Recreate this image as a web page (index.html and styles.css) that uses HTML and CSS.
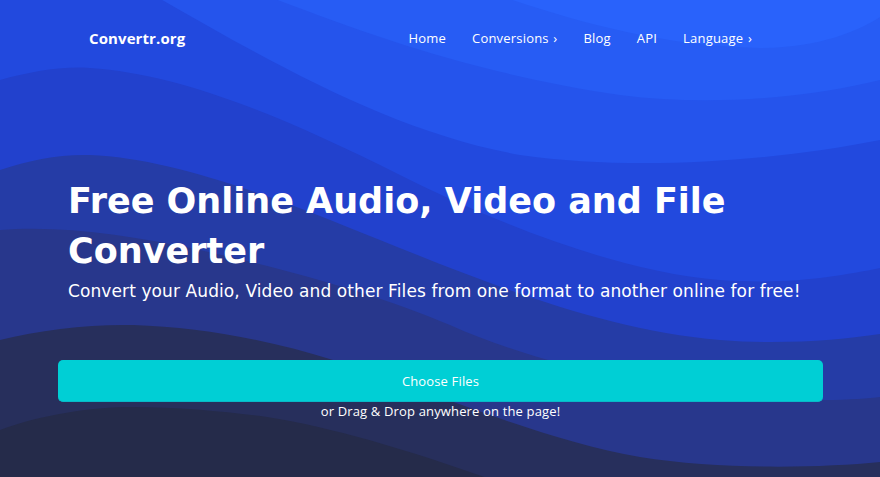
FILE: index.html
```html
<!DOCTYPE html>
<html lang="en">
<head>
<meta charset="utf-8">
<title>Convertr.org - Free Online Audio, Video and File Converter</title>
<link rel="stylesheet" href="styles.css">
</head>
<body>
<div class="page">
  <svg class="waves" viewBox="0 0 880 477" preserveAspectRatio="none" aria-hidden="true">
    <rect x="0" y="0" width="880" height="477" fill="#2962fb"/>
    <path fill="#275cf4" d="M-20,-30 L420,-30 C520,0 620,45 760,48 C820,48 860,30 880,17 L900,17 L900,500 L-20,500 Z"/>
    <path fill="#2554ec" d="M-20,-30 L200,-30 C330,20 450,70 620,95 C720,108 820,95 880,80 L900,80 L900,500 L-20,500 Z"/>
    <path fill="#2249de" d="M-20,-30 L110,-30 C250,50 380,130 520,155 C640,172 780,160 880,140 L900,140 L900,500 L-20,500 Z"/>
    <path fill="#2241cd" d="M-20,80 L0,80 C30,72 60,66 90,68 C180,74 280,115 400,175 C500,225 620,272 720,280 C790,285 840,276 880,268 L900,268 L900,500 L-20,500 Z"/>
    <path fill="#253ca6" d="M-20,170 L0,170 C30,160 60,154 90,155 C170,158 270,195 380,240 C480,280 600,330 720,340 C780,345 840,340 880,334 L900,334 L900,500 L-20,500 Z"/>
    <path fill="#28378c" d="M-20,230 L0,230 C60,225 130,235 200,250 C290,270 380,295 450,325 C550,370 700,400 823,400 C850,400 870,398 880,397 L900,397 L900,500 L-20,500 Z"/>
    <path fill="#272f5c" d="M-20,340 L0,340 C40,330 90,324 133,325 C200,327 270,340 333,360 C430,390 540,440 640,457 C720,470 820,468 880,462 L900,462 L900,500 L-20,500 Z"/>
    <path fill="#252b4a" d="M-20,430 L0,430 C40,415 90,407 133,407 C180,407 230,412 267,417 C340,428 440,460 520,490 L520,500 L-20,500 Z"/>
  </svg>

  <header class="topbar">
    <a class="logo" href="#">Convertr.org</a>
    <nav class="nav">
      <a class="nav-link" href="#">Home</a>
      <a class="nav-link" href="#">Conversions <span class="chev">›</span></a>
      <a class="nav-link" href="#">Blog</a>
      <a class="nav-link" href="#">API</a>
      <a class="nav-link" href="#">Language <span class="chev">›</span></a>
    </nav>
  </header>

  <main class="hero">
    <h1 class="title">Free Online Audio, Video and File Converter</h1>
    <p class="subtitle">Convert your Audio, Video and other Files from one format to another online for free!</p>
    <button class="choose" type="button">Choose Files</button>
    <p class="drop">or Drag &amp; Drop anywhere on the page!</p>
  </main>
</div>
</body>
</html>
```

FILE: styles.css
```css
* {
  box-sizing: border-box;
}

html, body {
  margin: 0;
  padding: 0;
  background: #252b4a;
}

body {
  font-family: "Open Sans", "Noto Sans", sans-serif;
  color: #ffffff;
}

.page {
  position: relative;
  width: 100%;
  height: 477px;
  overflow: hidden;
}

.waves {
  position: absolute;
  left: 0;
  top: 0;
  width: 100%;
  height: 100%;
  display: block;
  z-index: 0;
}

.topbar {
  position: relative;
  z-index: 1;
  display: flex;
  align-items: center;
  justify-content: space-between;
  height: 76px;
  padding: 0 128px 0 89px;
}

.logo {
  color: #ffffff;
  text-decoration: none;
  font-weight: 700;
  font-size: 15px;
  letter-spacing: 0.1px;
}

.nav {
  display: flex;
  align-items: center;
  gap: 26px;
}

.nav-link {
  color: #ffffff;
  text-decoration: none;
  font-size: 13px;
  line-height: 18px;
  letter-spacing: 0.2px;
}

.chev {
  margin-left: 1px;
}

.hero {
  position: relative;
  z-index: 1;
  display: flex;
  flex-direction: column;
  padding: 100px 57px 0 58px;
}

.title {
  margin: 0;
  padding-left: 10px;
  font-family: "DejaVu Sans", "Open Sans", sans-serif;
  font-size: 35px;
  line-height: 50px;
  font-weight: 700;
  letter-spacing: 0;
}

.subtitle {
  margin: 3px 0 0;
  padding-left: 10px;
  font-family: "DejaVu Sans", "Open Sans", sans-serif;
  font-size: 17px;
  line-height: 24px;
  letter-spacing: 0.1px;
}

.choose {
  margin-top: 57px;
  height: 42px;
  width: 100%;
  border: none;
  border-bottom: 1px solid #09b9c8;
  border-radius: 5px;
  background: #00cfd5;
  color: #ffffff;
  font-family: "Open Sans", "Noto Sans", sans-serif;
  font-size: 13px;
  font-weight: 400;
  letter-spacing: 0.15px;
  cursor: pointer;
}

.drop {
  margin: 0;
  text-align: center;
  font-size: 13px;
  line-height: 18px;
  letter-spacing: 0.15px;
}
```
